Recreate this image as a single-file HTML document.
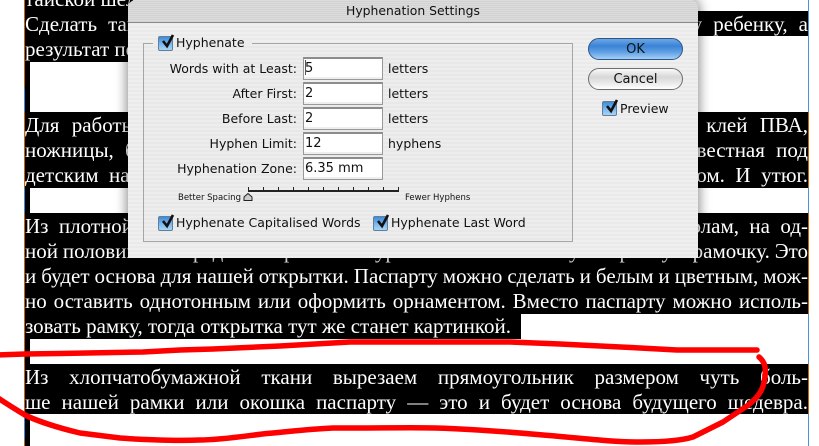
<!DOCTYPE html>
<html lang="ru"><head><meta charset="utf-8"><title>Hyphenation Settings</title>
<style>
html,body{margin:0;padding:0;background:#fff;}
#p{position:relative;width:819px;height:446px;overflow:hidden;background:#fff;}
.b{position:absolute;background:#000;}
.l{position:absolute;left:25px;width:783px;height:25px;color:#fff;font:21px/25px "Liberation Serif","Noto Serif CJK SC",serif;text-align:justify;text-align-last:justify;white-space:normal;overflow:hidden;}
.d *{position:absolute;}
#dlg{position:absolute;left:128px;top:0;width:570px;height:258px;border-radius:8px 8px 0 0;background:repeating-linear-gradient(180deg,#efefef 0,#efefef 2px,#eaeaea 2px,#eaeaea 4px);box-shadow:0 0 11px 2px rgba(0,0,0,.42);font-family:"DejaVu Sans",sans-serif;color:#111;}
#tb{left:0;top:0;width:570px;height:22px;border-radius:8px 8px 0 0;background:repeating-linear-gradient(180deg,#dcdcdc 0,#dcdcdc 1px,#d2d2d2 1px,#d2d2d2 2px);border-bottom:1px solid #8a8a8a;}
#tt{left:0;top:3px;width:570px;text-align:center;font-size:12.4px;line-height:16px;}
#gb{left:15px;top:43px;width:428px;height:197px;border:1px solid #a6a6a6;background:repeating-linear-gradient(180deg,#ededed 0,#ededed 2px,#e8e8e8 2px,#e8e8e8 4px);}
#gap{left:25px;top:40px;width:99px;height:6px;background:#ececec;}
.t{font-size:12.5px;line-height:16px;white-space:nowrap;}
.r{width:160px;left:9px;text-align:right;}
.f{left:175px;width:78px;height:20px;background:#fff;border:1px solid #999;border-top:2px solid #8c8c8c;box-shadow:inset 0 -2px 0 #eee;box-sizing:content-box;}
.v{left:177px;font-size:13px;line-height:16px;white-space:nowrap;}
.c{width:13px;height:13px;border-radius:2px;background:linear-gradient(180deg,#3f8ad8 0,#7db8ec 55%,#a9d4f4 100%);border:1px solid #5f7f9f;}
.ck{width:18px;height:18px;overflow:visible;}
.btn{left:460px;width:95px;height:22px;border-radius:11px;box-sizing:border-box;text-align:center;font-size:13px;line-height:22px;}
#ok{top:38px;background:linear-gradient(180deg,#6ea8e4 0,#3a83d6 35%,#5f9fe4 65%,#a4d0f6 100%);border:1px solid #2e5684;}
#cn{top:68px;background:linear-gradient(180deg,#fafafa 0,#d8d8d8 40%,#e6e6e6 65%,#fff 100%);border:1px solid #6e6e6e;}
.tk{width:1px;height:4px;top:187px;background:#222;}
</style></head><body><div id="p">
<div class="b" style="left:25px;top:0;width:206px;height:11px"></div>
<div class="b" style="left:25px;top:11px;width:783px;height:25px"></div>
<div class="b" style="left:25px;top:36px;width:300px;height:26px"></div>
<div class="b" style="left:25px;top:62px;width:5px;height:50px"></div>
<div class="b" style="left:25px;top:112px;width:783px;height:76px"></div>
<div class="b" style="left:25px;top:188px;width:5px;height:25px"></div>
<div class="b" style="left:25px;top:213px;width:783px;height:101px"></div>
<div class="b" style="left:25px;top:314px;width:496px;height:25px"></div>
<div class="b" style="left:25px;top:339px;width:5px;height:25px"></div>
<div class="b" style="left:25px;top:364px;width:783px;height:50px"></div>
<div class="b" style="left:25px;top:414px;width:5px;height:32px"></div>
<div style="position:absolute;left:24px;top:0;width:1px;height:446px;background:#c4640c"></div>
<div style="position:absolute;left:24px;top:87px;width:1px;height:25px;background:#3f8ad8"></div>
<div style="position:absolute;left:24px;top:188px;width:1px;height:25px;background:#3f8ad8"></div>
<div style="position:absolute;left:24px;top:414px;width:1px;height:25px;background:#3f8ad8"></div>
<div style="position:absolute;left:808px;top:0;width:1px;height:446px;background:#4a94dc"></div>
<div style="position:absolute;left:808px;top:112px;width:1px;height:76px;background:#c4640c"></div>
<div style="position:absolute;left:808px;top:213px;width:1px;height:101px;background:#c4640c"></div>
<div style="position:absolute;left:808px;top:364px;width:1px;height:50px;background:#c4640c"></div>

<div class="l" style="top:-13px;text-align-last:left">тайской шелковой тканью</div>
<div class="l" style="top:12px">Сделать такую открытку по силам и взрослому, и самому маленькому ребенку, а</div>
<div class="l" style="top:37px;text-align-last:left">результат получится</div>
<div class="l" style="top:113px">Для работы нам понадобятся плотная бумага, ткань, цветная бумага, клей ПВА,</div>
<div class="l" style="top:138px">ножницы, бисер, нитки с иголкой, кисти, тесьма, ленты и хорошо известная под</div>
<div class="l" style="top:163px">детским названием вещица — это простой карандаш с мягким ластиком. И утюг.</div>
<div class="l" style="top:214px">Из плотной бумаги сделаем заготовку для открытки, согнув лист пополам, на од-</div>
<div class="l" style="top:239px;word-spacing:-1px">ной половине посередине вырежем аккуратное окошко и получим ровную рамочку. Это</div>
<div class="l" style="top:264px;word-spacing:-2.5px">и будет основа для нашей открытки. Паспарту можно сделать и белым и цветным, мож-</div>
<div class="l" style="top:289px">но оставить однотонным или оформить орнаментом. Вместо паспарту можно исполь-</div>
<div class="l" style="top:314px;text-align-last:left">зовать рамку, тогда открытка тут же станет картинкой.</div>
<div class="l" style="top:365px">Из хлопчатобумажной ткани вырезаем прямоугольник размером чуть боль-</div>
<div class="l" style="top:390px">ше нашей рамки или окошка паспарту — это и будет основа будущего шедевра.</div>

<div id="dlg" class="d">
<div id="tb"></div><div id="tt">Hyphenation Settings</div>
<div id="gb"></div><div id="gap"></div>

<div class="c" style="left:30px;top:36px"></div>
<svg class="ck" style="left:32px;top:33px" viewBox="0 0 18 18"><path d="M3 8 L7 13 L13 2" fill="none" stroke="#111" stroke-width="2.6"/></svg>
<div class="t" style="left:48px;top:35px">Hyphenate</div>

<div class="t r" style="top:61px">Words with at Least:</div>
<div class="t r" style="top:86px">After First:</div>
<div class="t r" style="top:111px">Before Last:</div>
<div class="t r" style="top:136px">Hyphen Limit:</div>
<div class="t r" style="top:161px">Hyphenation Zone:</div>

<div class="f" style="top:57px"></div>
<div class="f" style="top:82px"></div>
<div class="f" style="top:107px"></div>
<div class="f" style="top:132px"></div>
<div class="f" style="top:157px"></div>
<div class="v" style="top:61px">5</div>
<div style="left:177px;top:60px;width:1px;height:15px;background:#555"></div>
<div class="v" style="top:86px">2</div>
<div class="v" style="top:111px">2</div>
<div class="v" style="top:136px">12</div>
<div class="v" style="top:161px">6.35 mm</div>

<div class="t" style="left:260px;top:61px">letters</div>
<div class="t" style="left:260px;top:86px">letters</div>
<div class="t" style="left:260px;top:111px">letters</div>
<div class="t" style="left:260px;top:136px">hyphens</div>

<div style="left:120px;top:190px;width:151px;height:1.5px;background:#222"></div>
<div class="tk" style="left:120px"></div><div class="tk" style="left:135px"></div><div class="tk" style="left:150px"></div><div class="tk" style="left:165px"></div><div class="tk" style="left:180px"></div><div class="tk" style="left:195px"></div><div class="tk" style="left:210px"></div><div class="tk" style="left:225px"></div><div class="tk" style="left:240px"></div><div class="tk" style="left:255px"></div><div class="tk" style="left:270px"></div>
<svg style="left:115px;top:193px;width:10px;height:8px" viewBox="0 0 10 8"><path d="M5 .5 L9 4 V7.5 H1 V4 Z" fill="#ccc" stroke="#222"/></svg>
<div style="left:50px;top:192px;font-size:8.5px;line-height:13px;white-space:nowrap">Better Spacing</div>
<div style="left:277px;top:192px;font-size:8.5px;line-height:13px;white-space:nowrap">Fewer Hyphens</div>

<div class="c" style="left:30px;top:216px"></div>
<svg class="ck" style="left:32px;top:213px" viewBox="0 0 18 18"><path d="M3 8 L7 13 L13 2" fill="none" stroke="#111" stroke-width="2.6"/></svg>
<div class="t" style="left:48px;top:215px">Hyphenate Capitalised Words</div>
<div class="c" style="left:245px;top:216px"></div>
<svg class="ck" style="left:247px;top:213px" viewBox="0 0 18 18"><path d="M3 8 L7 13 L13 2" fill="none" stroke="#111" stroke-width="2.6"/></svg>
<div class="t" style="left:263px;top:215px">Hyphenate Last Word</div>

<div id="ok" class="btn">OK</div>
<div id="cn" class="btn">Cancel</div>
<div class="c" style="left:474px;top:101px"></div>
<svg class="ck" style="left:476px;top:98px" viewBox="0 0 18 18"><path d="M3 8 L7 13 L13 2" fill="none" stroke="#111" stroke-width="2.6"/></svg>
<div class="t" style="left:492px;top:101px">Preview</div>
</div>

<svg style="position:absolute;left:0;top:0" width="819" height="446" viewBox="0 0 819 446">
<g fill="none" stroke="#f00" stroke-width="5.5" stroke-linecap="round" stroke-linejoin="round">
<path d="M-2 355 L25 354 L60 353.5 L143 352 L180 350 L213 349 L280 346 L350 342 L410 342 L510 342 L560 344 L590 345.5 L640 348 L677 350 L757 350"/>
<path d="M759 357 C765 362 766 368 765 376 C764 388 760 396 747 406 L723 422 L705 431 L693 437 C680 441 660 442 640 442 C610 442 580 438 543 435 C510 432 480 430 460 429 C430 427 400 428 333 428 C310 429 285 432 267 433.5 C245 436 220 440 200 440 C175 441 150 440 120 438 C105 436 95 435 80 433 C55 427 35 420 25 415 C15 409 7 404 -2 398"/>
</g></svg>
</div></body></html>
